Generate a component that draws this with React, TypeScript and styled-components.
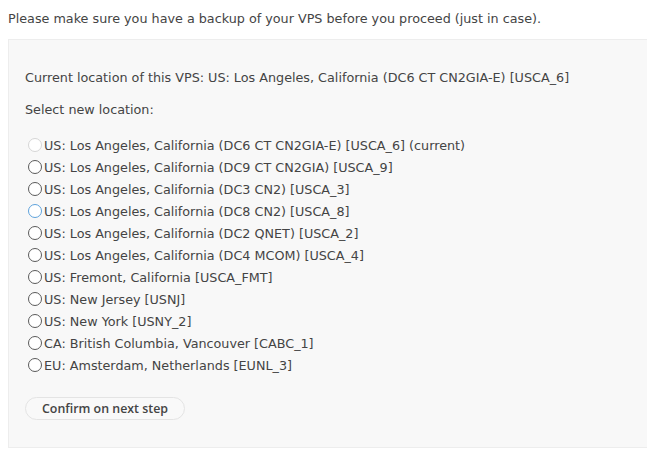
import React, { useState } from "react";
import styled, { createGlobalStyle } from "styled-components";

const GlobalStyle = createGlobalStyle`
  body {
    margin: 0;
    background: #fff;
    font-family: "DejaVu Sans", Verdana, sans-serif;
    font-size: 12.75px;
    color: #444;
  }
`;

const Page = styled.div`
  padding: 11px 0 0 8px;
  overflow: hidden;
  width: 647px;
  height: 452px;
  box-sizing: border-box;
`;

const Notice = styled.p`
  margin: 0 0 13px;
  line-height: 15px;
`;

const Panel = styled.div`
  background: #f8f8f8;
  border: 1px solid #ededed;
  border-right: none;
  width: 660px;
  height: 409px;
  box-sizing: border-box;
  padding: 30px 0 0 16px;
`;

const Line = styled.p`
  margin: 0 0 17px;
  line-height: 15px;
`;

const Options = styled.div`
  display: flex;
  flex-direction: column;
  margin-top: 17px;
`;

const Option = styled.label`
  display: flex;
  align-items: center;
  height: 22px;
  padding-left: 3px;
  cursor: pointer;
`;

const Radio = styled.span<{ $tone: "off" | "normal" | "focus" }>`
  width: 14px;
  height: 14px;
  border-radius: 50%;
  box-sizing: border-box;
  background: #fff;
  border: 1.4px solid
    ${(p) => (p.$tone === "off" ? "#d6d6d6" : p.$tone === "focus" ? "#5ea2dc" : "#5a5a5a")};
  margin-right: 2px;
  margin-top: -1px;
`;

const Button = styled.button`
  margin-top: 21px;
  font-family: "Open Sans", sans-serif;
  font-weight: 600;
  font-size: 12.4px;
  color: #444;
  background: #f9f9f9;
  border: 1px solid #e4e4e4;
  border-radius: 12px;
  height: 23px;
  padding: 0 16px;
  cursor: pointer;
`;

const locations = [
  "US: Los Angeles, California (DC6 CT CN2GIA-E) [USCA_6] (current)",
  "US: Los Angeles, California (DC9 CT CN2GIA) [USCA_9]",
  "US: Los Angeles, California (DC3 CN2) [USCA_3]",
  "US: Los Angeles, California (DC8 CN2) [USCA_8]",
  "US: Los Angeles, California (DC2 QNET) [USCA_2]",
  "US: Los Angeles, California (DC4 MCOM) [USCA_4]",
  "US: Fremont, California [USCA_FMT]",
  "US: New Jersey [USNJ]",
  "US: New York [USNY_2]",
  "CA: British Columbia, Vancouver [CABC_1]",
  "EU: Amsterdam, Netherlands [EUNL_3]",
];

const App = () => {
  const [picked, setPicked] = useState<number | null>(null);

  return (
    <Page>
      <GlobalStyle />
      <Notice>
        Please make sure you have a backup of your VPS before you proceed (just in case).
      </Notice>
      <Panel>
        <Line>
          Current location of this VPS: US: Los Angeles, California (DC6 CT CN2GIA-E) [USCA_6]
        </Line>
        <Line>Select new location:</Line>
        <Options>
          {locations.map((loc, i) => (
            <Option key={loc} onClick={() => i > 0 && setPicked(i)}>
              <Radio $tone={i === 0 ? "off" : i === 3 || picked === i ? "focus" : "normal"} />
              {loc}
            </Option>
          ))}
        </Options>
        <Button>Confirm on next step</Button>
      </Panel>
    </Page>
  );
};

export default App;
